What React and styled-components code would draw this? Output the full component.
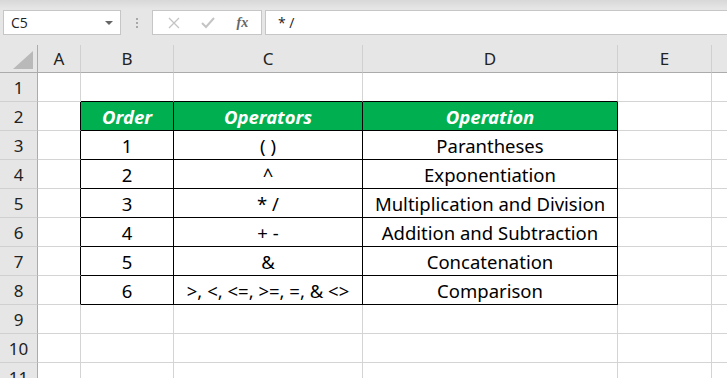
import React from "react";
import styled, { createGlobalStyle } from "styled-components";

const GlobalStyle = createGlobalStyle`
  html, body {
    margin: 0;
    padding: 0;
    background: #ffffff;
    overflow: hidden;
  }
`;

const COLS = [
  { key: "corner", width: 38, label: "" },
  { key: "A", width: 43, label: "A" },
  { key: "B", width: 93, label: "B" },
  { key: "C", width: 189, label: "C" },
  { key: "D", width: 255, label: "D" },
  { key: "E", width: 94, label: "E" },
  { key: "F", width: 40, label: "" },
];

const ROWS = [
  ["", "", "", ""],
  ["", "Order", "Operators", "Operation"],
  ["", "1", "( )", "Parantheses"],
  ["", "2", "^", "Exponentiation"],
  ["", "3", "* /", "Multiplication and Division"],
  ["", "4", "+ -", "Addition and Subtraction"],
  ["", "5", "&", "Concatenation"],
  ["", "6", ">, <, <=, >=, =, & <>", "Comparison"],
  ["", "", "", ""],
  ["", "", "", ""],
  ["", "", "", ""],
];

const Sheet = styled.div`
  width: 727px;
  height: 378px;
  overflow: hidden;
  background: #ffffff;
  font-family: "Noto Sans", "Open Sans", sans-serif;
`;

const FormulaBar = styled.div`
  height: 45px;
  box-sizing: border-box;
  padding: 10px 0 10px 3px;
  display: flex;
  align-items: stretch;
  background: linear-gradient(#d8d8d8 0px, #e6e6e6 9px, #e6e6e6 100%);
  font-family: "Open Sans", "Liberation Sans", sans-serif;
`;

const NameBox = styled.div`
  width: 118px;
  box-sizing: border-box;
  background: #ffffff;
  border: 1px solid #c6c6c6;
  display: flex;
  align-items: center;
  justify-content: space-between;
  padding: 0 7px 0 7px;
  font-size: 14px;
  color: #222;
`;

const Caret = styled.span`
  width: 0;
  height: 0;
  border-left: 4px solid transparent;
  border-right: 4px solid transparent;
  border-top: 4px solid #666;
`;

const Grip = styled.div`
  width: 31px;
  display: flex;
  flex-direction: column;
  align-items: center;
  justify-content: center;
  gap: 2px;

  span {
    width: 2px;
    height: 2px;
    background: #a8a8a8;
  }
`;

const FxBox = styled.div`
  width: 110px;
  box-sizing: border-box;
  background: #ffffff;
  border: 1px solid #c6c6c6;
  display: flex;
  align-items: center;
  justify-content: space-around;
  padding: 0 2px 0 4px;
`;

const FxLabel = styled.span`
  font-family: "Liberation Serif", serif;
  font-style: italic;
  font-weight: 700;
  font-size: 14px;
  color: #666;
`;

const FormulaInput = styled.div`
  flex: 1;
  margin-left: 3px;
  background: #ffffff;
  border: 1px solid #c6c6c6;
  border-right: none;
  display: flex;
  align-items: center;
  padding-left: 12px;
  font-size: 14px;
  color: #222;
`;

const Grid = styled.div`
  display: grid;
  grid-template-columns: ${COLS.map((c) => `${c.width}px`).join(" ")};
  grid-template-rows: 28px repeat(${ROWS.length}, 29px);
`;

const ColHead = styled.div`
  box-sizing: border-box;
  background: #e6e6e6;
  border-bottom: 1px solid #ababab;
  border-right: 1px solid ${(p) => (p.$corner ? "#ababab" : "#d0d0d0")};
  display: flex;
  align-items: center;
  justify-content: center;
  font-size: 17px;
  color: #222;
  position: relative;
`;

const CornerTriangle = styled.span`
  position: absolute;
  right: 4px;
  bottom: 3px;
  width: 0;
  height: 0;
  border-left: 20px solid transparent;
  border-bottom: 18px solid #b9b9b9;
`;

const RowHead = styled.div`
  box-sizing: border-box;
  background: #e6e6e6;
  border-right: 1px solid #ababab;
  border-bottom: 1px solid #d0d0d0;
  display: flex;
  align-items: center;
  justify-content: center;
  font-size: 17px;
  color: #222;
`;

const Cell = styled.div`
  box-sizing: border-box;
  border-right: 1px solid ${(p) => (p.$rightDark ? "#000" : "#d4d4d4")};
  border-bottom: 1px solid ${(p) => (p.$bottomDark ? "#000" : "#d4d4d4")};
  background: ${(p) => (p.$head ? "#00b050" : "#ffffff")};
  color: ${(p) => (p.$head ? "#ffffff" : "#000")};
  font-weight: ${(p) => (p.$head ? 700 : 400)};
  font-style: ${(p) => (p.$head ? "italic" : "normal")};
  display: flex;
  align-items: center;
  justify-content: center;
  padding-top: 1px;
  font-size: 18.5px;
  white-space: nowrap;
  overflow: hidden;
`;

const XIcon = () => (
  <svg width="12" height="12" viewBox="0 0 12 12">
    <path d="M1 1 L11 11 M11 1 L1 11" stroke="#c4c4c4" strokeWidth="1.3" fill="none" />
  </svg>
);

const CheckIcon = () => (
  <svg width="14" height="12" viewBox="0 0 14 12">
    <path d="M1 6 L5 10 L13 1" stroke="#c4c4c4" strokeWidth="2" fill="none" />
  </svg>
);

const App = () => {
  const letters = COLS.slice(1);
  return (
    <Sheet>
      <GlobalStyle />
      <FormulaBar>
        <NameBox>
          C5
          <Caret />
        </NameBox>
        <Grip>
          <span />
          <span />
          <span />
        </Grip>
        <FxBox>
          <XIcon />
          <CheckIcon />
          <FxLabel>fx</FxLabel>
        </FxBox>
        <FormulaInput>* /</FormulaInput>
      </FormulaBar>
      <Grid>
        <ColHead $corner>
          <CornerTriangle />
        </ColHead>
        {letters.map((c) => (
          <ColHead key={c.key}>{c.label}</ColHead>
        ))}
        {ROWS.map((row, r) => (
          <React.Fragment key={r}>
            <RowHead>{r + 1}</RowHead>
            {[...row, "", ""].map((text, c) => (
              <Cell
                key={c}
                $head={r === 1 && c >= 1 && c <= 3}
                $rightDark={r >= 1 && r <= 7 && c >= 0 && c <= 3}
                $bottomDark={c >= 1 && c <= 3 && r >= 0 && r <= 7}
              >
                {text}
              </Cell>
            ))}
          </React.Fragment>
        ))}
      </Grid>
    </Sheet>
  );
};

export default App;
